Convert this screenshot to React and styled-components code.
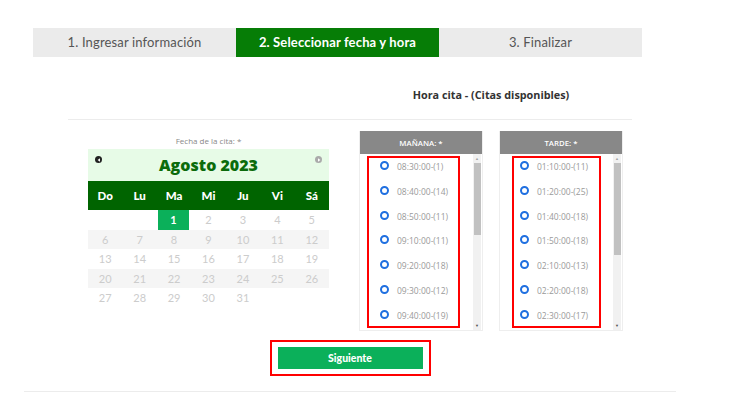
import React from "react";
import styled, { createGlobalStyle } from "styled-components";

const GlobalStyle = createGlobalStyle`
  body {
    margin: 0;
    background: #ffffff;
    font-family: "Open Sans", "Liberation Sans", sans-serif;
  }
`;

const steps = ["1. Ingresar información", "2. Seleccionar fecha y hora", "3. Finalizar"];
const weekDays = ["Do", "Lu", "Ma", "Mi", "Ju", "Vi", "Sá"];
const weeks = [
  [null, null, 1, 2, 3, 4, 5],
  [6, 7, 8, 9, 10, 11, 12],
  [13, 14, 15, 16, 17, 18, 19],
  [20, 21, 22, 23, 24, 25, 26],
  [27, 28, 29, 30, 31, null, null],
];
const manana = [
  "08:30:00-(1)",
  "08:40:00-(14)",
  "08:50:00-(11)",
  "09:10:00-(11)",
  "09:20:00-(18)",
  "09:30:00-(12)",
  "09:40:00-(19)",
];
const tarde = [
  "01:10:00-(11)",
  "01:20:00-(25)",
  "01:40:00-(18)",
  "01:50:00-(18)",
  "02:10:00-(13)",
  "02:20:00-(18)",
  "02:30:00-(17)",
];

export default function App() {
  return (
    <>
      <GlobalStyle />
      <Page>
        <Tabs>
          {steps.map((s, i) => (
            <Tab key={s} active={i === 1}>
              {s}
            </Tab>
          ))}
        </Tabs>

        <Outer>
          <Content>
            <TitleRow>
              <Title>Hora cita - (Citas disponibles)</Title>
            </TitleRow>

            <Body>
              <CalendarCol>
                <Label>Fecha de la cita: *</Label>
                <MonthBar>
                  <NavDot dark>
                    <svg width="4" height="4" viewBox="0 0 4 4">
                      <path d="M3 0.3 L0.6 2 L3 3.7 Z" fill="#fff" />
                    </svg>
                  </NavDot>
                  <Month>Agosto 2023</Month>
                  <NavDot>
                    <svg width="4" height="4" viewBox="0 0 4 4">
                      <path d="M1 0.3 L3.4 2 L1 3.7 Z" fill="#fff" />
                    </svg>
                  </NavDot>
                </MonthBar>
                <WeekHead>
                  {weekDays.map((d) => (
                    <HeadCell key={d}>{d}</HeadCell>
                  ))}
                </WeekHead>
                {weeks.map((w, i) => (
                  <WeekRow key={i} shaded={i % 2 === 1}>
                    {w.map((d, j) => (
                      <DayCell key={j} selected={d === 1}>
                        {d}
                      </DayCell>
                    ))}
                  </WeekRow>
                ))}
              </CalendarCol>

              <Slots>
                <Panel>
                  <PanelHead>MAÑANA: *</PanelHead>
                  <PanelBody>
                    <Marked left={8} width={93}>
                      {manana.map((h) => (
                        <Slot key={h} indent={11}>
                          <Radio />
                          <SlotText>{h}</SlotText>
                        </Slot>
                      ))}
                    </Marked>
                    <Scrollbar>
                      <Arrow>▲</Arrow>
                      <Thumb />
                      <Arrow down>▼</Arrow>
                    </Scrollbar>
                  </PanelBody>
                </Panel>

                <Panel>
                  <PanelHead>TARDE: *</PanelHead>
                  <PanelBody>
                    <Marked left={13} width={89}>
                      {tarde.map((h) => (
                        <Slot key={h} indent={6}>
                          <Radio />
                          <SlotText>{h}</SlotText>
                        </Slot>
                      ))}
                    </Marked>
                    <Scrollbar>
                      <Arrow>▲</Arrow>
                      <Thumb tall />
                      <Arrow down>▼</Arrow>
                    </Scrollbar>
                  </PanelBody>
                </Panel>
              </Slots>
            </Body>

            <ButtonRow>
              <ButtonFrame>
                <NextButton>Siguiente</NextButton>
              </ButtonFrame>
            </ButtonRow>
          </Content>
        </Outer>
      </Page>
    </>
  );
}

const Page = styled.div`
  width: 750px;
  height: 400px;
  padding-top: 28px;
  box-sizing: border-box;
  overflow: hidden;
`;

const Tabs = styled.div`
  margin-left: 33px;
  width: 609px;
  height: 29px;
  display: flex;
  background: #ebebeb;
`;

const Tab = styled.div`
  flex: 1;
  display: flex;
  align-items: center;
  justify-content: center;
  padding-bottom: 2px;
  font-family: "Lato", "Liberation Sans", sans-serif;
  font-size: 13px;
  font-weight: ${(p) => (p.active ? 700 : 400)};
  letter-spacing: 0.15px;
  color: ${(p) => (p.active ? "#ffffff" : "#555555")};
  background: ${(p) => (p.active ? "#067d06" : "transparent")};
`;

const Outer = styled.div`
  margin-left: 24px;
  width: 652px;
  border-bottom: 1px solid #ececec;
  padding-bottom: 15px;
`;

const Content = styled.div`
  margin-left: 44px;
  width: 564px;
`;

const TitleRow = styled.div`
  height: 62px;
  border-bottom: 1px solid #ececec;
`;

const Title = styled.div`
  margin-left: 291px;
  width: 264px;
  padding-top: 31px;
  text-align: center;
  font-family: "Open Sans", "Liberation Sans", sans-serif;
  font-size: 10.8px;
  line-height: 14px;
  font-weight: 700;
  color: #333333;
`;

const Body = styled.div`
  display: flex;
  align-items: flex-start;
`;

const CalendarCol = styled.div`
  margin-left: 20px;
  width: 241px;
  padding-top: 15px;
`;

const Label = styled.div`
  text-align: center;
  font-size: 8px;
  line-height: 11px;
  color: #888888;
  margin-bottom: 3px;
`;

const MonthBar = styled.div`
  height: 32px;
  background: #e7fbe7;
  display: flex;
  align-items: flex-start;
  justify-content: space-between;
  padding: 7px 7px 0 7px;
  box-sizing: border-box;
`;

const NavDot = styled.div`
  width: 7px;
  height: 7px;
  border-radius: 50%;
  background: ${(p) => (p.dark ? "#222222" : "#aaaaaa")};
  display: flex;
  align-items: center;
  justify-content: center;
`;

const Month = styled.div`
  font-size: 16px;
  line-height: 18px;
  font-weight: 800;
  color: #0b6b0b;
`;

const WeekHead = styled.div`
  height: 29px;
  background: #006400;
  display: grid;
  grid-template-columns: repeat(7, 1fr);
  align-items: center;
`;

const HeadCell = styled.div`
  text-align: center;
  font-family: "Lato", "Liberation Sans", sans-serif;
  font-size: 11.5px;
  font-weight: 900;
  color: #ffffff;
`;

const WeekRow = styled.div`
  height: 19.5px;
  display: grid;
  grid-template-columns: repeat(7, 1fr);
  background: ${(p) => (p.shaded ? "#f5f5f5" : "#ffffff")};
`;

const DayCell = styled.div`
  display: flex;
  align-items: center;
  justify-content: center;
  font-family: "Lato", "Liberation Sans", sans-serif;
  font-size: 11px;
  font-weight: ${(p) => (p.selected ? 700 : 400)};
  color: ${(p) => (p.selected ? "#ffffff" : "#cccccc")};
  background: ${(p) => (p.selected ? "#0bb05a" : "transparent")};
  margin: ${(p) => (p.selected ? "0 2px 0 1px" : "0")};
`;

const Slots = styled.div`
  margin-left: 30px;
  padding-top: 11px;
  display: flex;
  gap: 16px;
`;

const Panel = styled.div`
  width: 124px;
  border: 1px solid #eeeeee;
  border-top: none;
  box-sizing: border-box;
`;

const PanelHead = styled.div`
  height: 23px;
  background: #888888;
  display: flex;
  align-items: center;
  justify-content: center;
  font-size: 7.8px;
  font-weight: 600;
  color: #ffffff;
`;

const PanelBody = styled.div`
  height: 176px;
  display: flex;
`;

const Marked = styled.div`
  margin-left: ${(p) => p.left - 1}px;
  width: ${(p) => p.width}px;
  height: 172px;
  margin-top: 2px;
  border: 2px solid #ff0000;
  box-sizing: border-box;
  padding-top: 3px;
  overflow: hidden;
`;

const Slot = styled.div`
  height: 24.8px;
  display: flex;
  align-items: flex-start;
  padding-left: ${(p) => p.indent}px;
`;

const Radio = styled.span`
  width: 5px;
  height: 5px;
  border: 2px solid #1f6fe0;
  border-radius: 50%;
  flex: none;
`;

const SlotText = styled.span`
  margin-left: 8px;
  font-size: 8.5px;
  line-height: 10px;
  margin-top: 1px;
  color: #9a9a9a;
  white-space: nowrap;
`;

const Scrollbar = styled.div`
  margin-left: auto;
  margin-right: 1px;
  width: 8px;
  height: 176px;
  background: #f1f1f1;
  display: flex;
  flex-direction: column;
  align-items: center;
`;

const Arrow = styled.div`
  height: 9px;
  font-size: 4px;
  line-height: 9px;
  color: ${(p) => (p.down ? "#505050" : "#a3a3a3")};
  margin-top: ${(p) => (p.down ? "auto" : "0")};
`;

const Thumb = styled.div`
  width: 7px;
  height: ${(p) => (p.tall ? "92px" : "72px")};
  background: #c1c1c1;
`;

const ButtonRow = styled.div`
  display: flex;
  justify-content: center;
  padding-top: 9px;
`;

const ButtonFrame = styled.div`
  width: 161px;
  height: 36px;
  border: 2px solid #ff0000;
  box-sizing: border-box;
  display: flex;
  align-items: center;
  justify-content: center;
`;

const NextButton = styled.button`
  width: 145px;
  height: 22px;
  border: none;
  background: #0bb05a;
  color: #ffffff;
  font-family: "Lato", "Liberation Sans", sans-serif;
  font-size: 10.5px;
  font-weight: 900;
  padding: 0;
`;
